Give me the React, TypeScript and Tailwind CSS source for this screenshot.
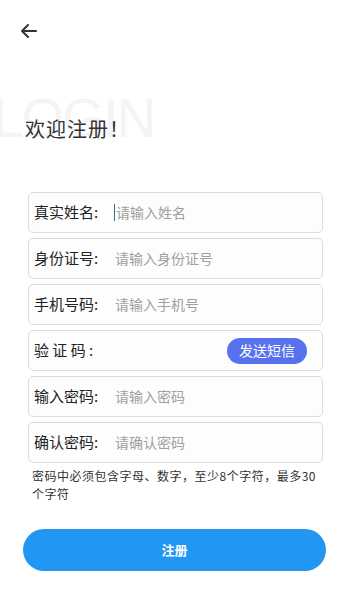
const font = { fontFamily: '"Noto Sans CJK SC", "Noto Sans", sans-serif' };

type Field = { label: string; placeholder?: string; sms?: boolean };

const fields: Field[] = [
  { label: "真实姓名:", placeholder: "请输入姓名" },
  { label: "身份证号:", placeholder: "请输入身份证号" },
  { label: "手机号码:", placeholder: "请输入手机号" },
  { label: "验 证 码 :", sms: true },
  { label: "输入密码:", placeholder: "请输入密码" },
  { label: "确认密码:", placeholder: "请确认密码" },
];

export default function App() {
  return (
    <div className="w-[349px] h-[600px] bg-white overflow-hidden" style={font}>
      <div className="h-[62px] pl-[19px] pt-[22px]">
        <svg width="20" height="18" viewBox="0 0 20 18" fill="none" stroke="#333" strokeWidth="2" strokeLinecap="round" strokeLinejoin="round">
          <path d="M17 9H3M9 3L3 9l6 6" />
        </svg>
      </div>

      <div className="relative h-[130px]">
        <div className="absolute left-[-7px] top-[29px] text-[55px] leading-none text-[#f4f4f4] tracking-[-2px] font-['Liberation_Sans',sans-serif] font-light">
          LOGIN
        </div>
        <div className="relative pl-[25px] pt-[54px] text-[20px] leading-[26px] tracking-[1px] text-[#333]">欢迎注册！</div>
      </div>

      <div className="ml-[28px] mr-[26px] flex flex-col gap-[5px]">
        {fields.map((f, i) => (
          <div
            key={i}
            className="h-[41px] border border-[#dcdcdc] rounded-[5px] bg-[#fdfdfd] flex items-center pl-[5px] pr-[15px]"
          >
            <span className="w-[80px] text-[15px] text-[#222] shrink-0">{f.label}</span>
            {f.sms ? (
              <div className="ml-auto h-[26px] px-[12px] rounded-full bg-[#5872ef] text-white text-[14px] flex items-center">
                发送短信
              </div>
            ) : (
              <span className="flex items-center text-[14px] text-[#a0a0a0]">
                {i === 0 && <span className="w-px h-[17px] bg-[#1a7f8a] mr-[1px]" />}
                <span className={i === 0 ? "" : "pl-[1px]"}>{f.placeholder}</span>
              </span>
            )}
          </div>
        ))}
      </div>

      <p className="ml-[32px] mr-[28px] mt-[4px] text-[12px] leading-[18px] tracking-[0.5px] text-[#333]">
        密码中必须包含字母、数字，至少8个字符，最多30个字符
      </p>

      <div className="mx-[23px] mt-[26px] h-[42px] rounded-full bg-[#2196f3] flex items-center justify-center text-white text-[13px] font-bold">
        注册
      </div>
    </div>
  );
}
